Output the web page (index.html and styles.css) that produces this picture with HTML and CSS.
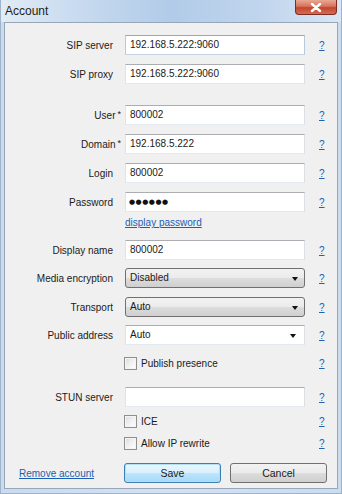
FILE: index.html
```html
<!DOCTYPE html>
<html>
<head>
<meta charset="utf-8">
<link rel="stylesheet" href="styles.css">
</head>
<body>
<div class="window">
  <div class="titlebar">
    <span class="title">Account</span>
    <div class="close">
      <svg width="12" height="9" viewBox="0 0 12 9"><path d="M2 1 L10 8 M10 1 L2 8" stroke="#fff" stroke-width="2.4" stroke-linecap="round"/></svg>
    </div>
  </div>
  <div class="panel">
    <div class="row mb9">
      <div class="label">SIP server</div>
      <div class="field focus">192.168.5.222:9060</div>
      <a class="help">?</a>
    </div>
    <div class="row mb21">
      <div class="label">SIP proxy</div>
      <div class="field">192.168.5.222:9060</div>
      <a class="help">?</a>
    </div>
    <div class="row mb9">
      <div class="label">User<span class="req">*</span></div>
      <div class="field">800002</div>
      <a class="help">?</a>
    </div>
    <div class="row mb9">
      <div class="label">Domain<span class="req">*</span></div>
      <div class="field">192.168.5.222</div>
      <a class="help">?</a>
    </div>
    <div class="row mb9">
      <div class="label">Login</div>
      <div class="field">800002</div>
      <a class="help">?</a>
    </div>
    <div class="row mb3">
      <div class="label">Password</div>
      <div class="field pass">●●●●●●</div>
      <a class="help">?</a>
    </div>
    <div class="row linkrow mb10">
      <div class="label"></div>
      <a class="link">display password</a>
      <span></span>
    </div>
    <div class="row mb8">
      <div class="label">Display name</div>
      <div class="field">800002</div>
      <a class="help">?</a>
    </div>
    <div class="row mb9">
      <div class="label">Media encryption</div>
      <div class="combo">Disabled<span class="arrow"></span></div>
      <a class="help">?</a>
    </div>
    <div class="row mb8">
      <div class="label">Transport</div>
      <div class="combo">Auto<span class="arrow"></span></div>
      <a class="help">?</a>
    </div>
    <div class="row mb10">
      <div class="label">Public address</div>
      <div class="field editcombo">Auto<span class="arrow"></span></div>
      <a class="help">?</a>
    </div>
    <div class="row checkrow mb16">
      <div class="label"></div>
      <div class="check"><span class="box"></span>Publish presence</div>
      <a class="help">?</a>
    </div>
    <div class="row mb7">
      <div class="label">STUN server</div>
      <div class="field"></div>
      <a class="help">?</a>
    </div>
    <div class="row checkrow small mb8">
      <div class="label"></div>
      <div class="check"><span class="box"></span>ICE</div>
      <a class="help">?</a>
    </div>
    <div class="row checkrow small mb13">
      <div class="label"></div>
      <div class="check"><span class="box"></span>Allow IP rewrite</div>
      <a class="help">?</a>
    </div>
    <div class="footer">
      <a class="link remove">Remove account</a>
      <div class="buttons">
        <div class="btn default">Save</div>
        <div class="btn">Cancel</div>
      </div>
    </div>
  </div>
</div>
</body>
</html>
```

FILE: styles.css
```css
* { box-sizing: border-box; }
html, body { margin: 0; padding: 0; }
body {
  width: 342px;
  height: 494px;
  overflow: hidden;
  font-family: "Liberation Sans", Arial, sans-serif;
  font-size: 10px;
  color: #1a1a1a;
}
.window {
  width: 342px;
  height: 494px;
  display: flex;
  flex-direction: column;
  padding: 0 3px 4px 3px;
  background: linear-gradient(to right, #c9dbee, #d3e2f2 50%, #cadcef);
  border-left: 1px solid #9fb3c9;
  border-right: 1px solid #9fb3c9;
  border-bottom: 1px solid #9fb3c9;
}
.titlebar {
  height: 22px;
  margin: 0 -3px;
  padding: 0 4px 0 4px;
  display: flex;
  justify-content: space-between;
  align-items: flex-start;
  background: linear-gradient(to right, #e3ecf6 0%, #cadcf0 20%, #b1cbe8 50%, #c3d7ee 80%, #d9e6f4 100%);
}
.title {
  font-size: 12px;
  line-height: 22px;
  color: #1c1c1c;
}
.close {
  width: 42px;
  height: 15px;
  border: 1px solid #7e2c22;
  border-top: none;
  border-radius: 0 0 4px 4px;
  background: linear-gradient(to bottom, #eaa894 0%, #d7735e 45%, #c2452e 55%, #d46c52 100%);
  display: flex;
  align-items: center;
  justify-content: center;
}
.panel {
  flex: 1;
  border: 1px solid #97a6b9;
  background: #f0f0f0;
  padding-top: 12px;
  display: flex;
  flex-direction: column;
}
.row {
  display: grid;
  grid-template-columns: 108px 180px 1fr;
  column-gap: 12px;
  align-items: center;
  height: 20px;
}
.mb3 { margin-bottom: 3px; }
.mb7 { margin-bottom: 7px; }
.mb8 { margin-bottom: 8px; }
.mb9 { margin-bottom: 9px; }
.mb10 { margin-bottom: 10px; }
.mb13 { margin-bottom: 13px; }
.mb16 { margin-bottom: 16px; }
.mb21 { margin-bottom: 21px; }
.label {
  text-align: right;
  white-space: nowrap;
}
.req {
  margin-left: 2px;
  margin-right: -8px;
  font-size: 9px;
  vertical-align: 2px;
}
.field {
  height: 20px;
  background: #fff;
  border: 1px solid;
  border-color: #abadb3 #dbdfe6 #e3e9ef #e2e3ea;
  padding: 0 4px;
  line-height: 18px;
  white-space: nowrap;
  position: relative;
}
.field.focus {
  border-color: #8fa8c4 #b9c9dc #c5d4e4 #b9c9dc;
}
.field.pass {
  font-family: "DejaVu Sans", sans-serif;
  font-size: 7px;
  letter-spacing: 0.5px;
  padding-left: 3px;
  color: #111;
}
.help {
  padding-left: 2px;
  color: #2060b0;
  text-decoration: underline;
  font-size: 10px;
}
.linkrow { height: 15px; }
.link {
  color: #1a5fb4;
  text-decoration: underline;
  white-space: nowrap;
}
.combo {
  height: 20px;
  border: 1px solid #707070;
  border-radius: 3px;
  background: linear-gradient(to bottom, #f2f2f2 0%, #ebebeb 50%, #dddddd 50%, #cfcfcf 100%);
  padding: 0 4px;
  line-height: 18px;
  position: relative;
}
.arrow {
  position: absolute;
  right: 6px;
  top: 8px;
  width: 0;
  height: 0;
  border-left: 3.5px solid transparent;
  border-right: 3.5px solid transparent;
  border-top: 4px solid #111;
}
.editcombo .arrow { right: 8px; }
.checkrow { height: 16px; }
.checkrow.small { height: 14px; }
.check {
  display: flex;
  align-items: center;
  white-space: nowrap;
  margin-left: -1px;
}
.box {
  width: 13px;
  height: 13px;
  border: 1px solid #8e8f8f;
  background: linear-gradient(135deg, #dcdcdc 0%, #f4f4f4 60%, #ffffff 100%);
  box-shadow: inset 0 0 0 1px #f4f4f4;
  margin-right: 4px;
  flex: none;
}
.footer {
  display: flex;
  align-items: center;
  height: 20px;
}
.remove {
  width: 119px;
  padding-left: 14px;
}
.buttons {
  display: flex;
  gap: 9px;
}
.btn {
  width: 97px;
  height: 20px;
  border: 1px solid #707070;
  border-radius: 3px;
  background: linear-gradient(to bottom, #f2f2f2 0%, #ebebeb 50%, #dddddd 50%, #cfcfcf 100%);
  text-align: center;
  line-height: 18px;
  font-size: 10.5px;
}
.btn.default {
  border-color: #3c7fb1;
  box-shadow: inset 0 0 0 1px #b4dff5;
  background: linear-gradient(to bottom, #eaf6fd 0%, #d9f0fc 50%, #bee6fd 50%, #a7d9f5 100%);
}
```
